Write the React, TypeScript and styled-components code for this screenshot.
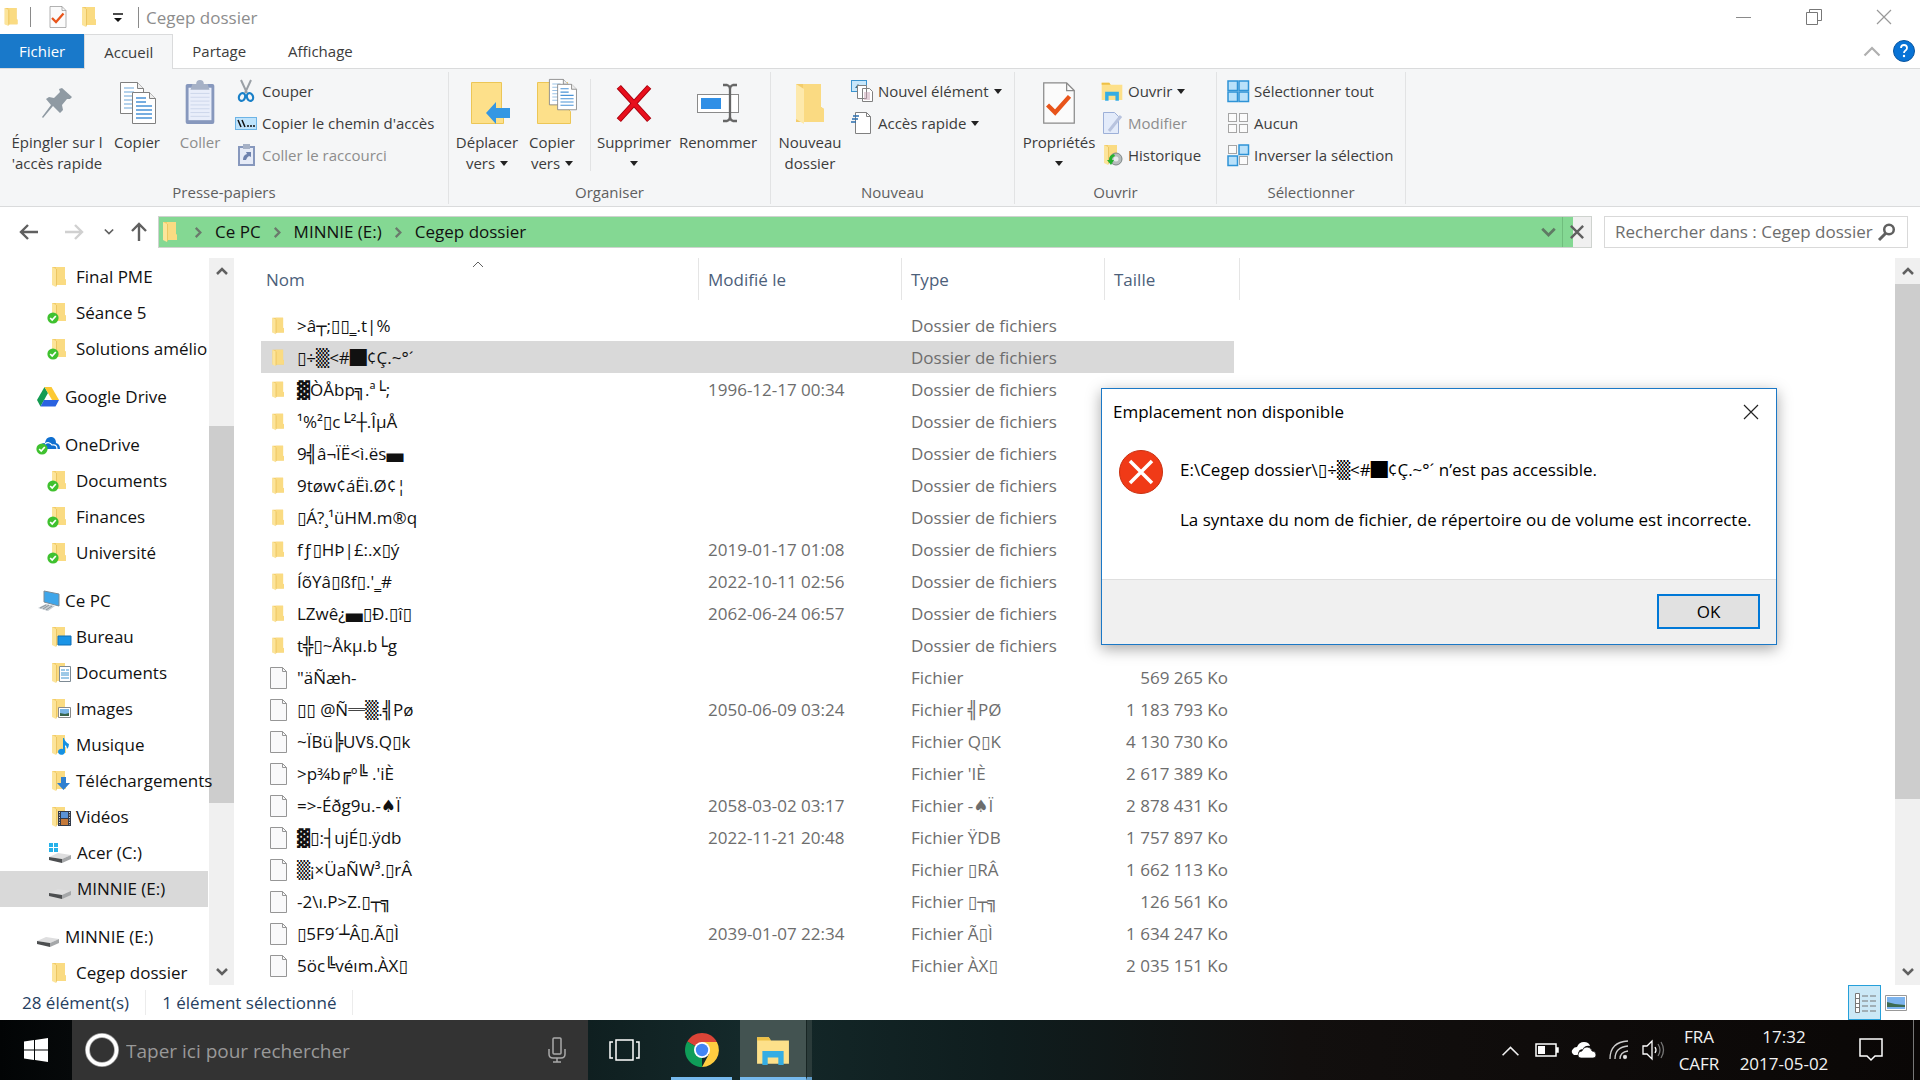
import React from "react";
import styled, { createGlobalStyle } from "styled-components";

const FONT = `"Open Sans", "Noto Sans", "DejaVu Sans", sans-serif`;

const Global = createGlobalStyle`
  *, *::before, *::after { box-sizing: border-box; }
  body { margin: 0; background: #fff; font-family: ${FONT}; font-size: 17px; line-height: 24px; color: #000; }
  button { font: inherit; color: inherit; background: none; border: 0; padding: 0; cursor: default; }
  input { font: inherit; }
  svg { display: block; flex: none; overflow: visible; }
`;

const Window = styled.div`
  position: relative;
  display: flex;
  flex-direction: column;
  height: 100vh;
  overflow: hidden;
`;

/* ---------- Title bar and tabs ---------- */

const TitleBar = styled.header`
  display: flex;
  align-items: center;
  height: 34px;
  flex: none;
  padding-left: 2px;
  color: #8d8d8d;
`;

const TitleRule = styled.span`
  width: 1px;
  height: 20px;
  background: #8a8a8a;
  margin: 0 11px 0 8px;
`;

const QuickButton = styled.button<{ $width?: number }>`
  display: flex;
  justify-content: center;
  width: ${(p) => p.$width ?? 32}px;
`;

const TitleText = styled.h1`
  margin: 0 0 0 8px;
  padding: 1px 0 0 7px;
  border-left: 1px solid #8a8a8a;
  font-size: 17px;
  line-height: 20px;
  font-weight: 400;
`;

const WindowButtons = styled.div`
  display: flex;
  margin-left: auto;
  padding-right: 1px;
`;

const WindowButton = styled.button`
  display: flex;
  align-items: center;
  justify-content: center;
  width: 70px;
  height: 34px;
`;

const TabStrip = styled.nav`
  display: flex;
  height: 35px;
  flex: none;
  border-bottom: 1px solid #dadbdc;
`;

const Tab = styled.button<{ $kind?: "file" | "active" }>`
  height: ${(p) => (p.$kind === "active" ? 35 : 34)}px;
  padding: 0 19px 1px;
  margin-right: ${(p) => (p.$kind ? 0 : 4)}px;
  font-size: 15px;
  color: ${(p) => (p.$kind === "file" ? "#fff" : "#3c3c3c")};
  background: ${(p) => (p.$kind === "file" ? "#1979ca" : p.$kind === "active" ? "#f5f6f7" : "transparent")};
  border: solid #dadbdc;
  border-width: ${(p) => (p.$kind === "active" ? "1px 1px 0 1px" : "0")};
`;

const TabTools = styled.div`
  display: flex;
  align-items: center;
  gap: 12px;
  margin-left: auto;
  padding-right: 5px;
`;

/* ---------- Ribbon ---------- */

const Ribbon = styled.section`
  display: flex;
  flex: none;
  height: 138px;
  background: #f5f6f7;
  border-bottom: 1px solid #dadbdc;
  font-size: 15px;
  color: #3c3c3c;
`;

const Group = styled.div<{ $width: number; $lead: number }>`
  display: flex;
  flex-direction: column;
  width: ${(p) => p.$width}px;
  margin: 3px 0 2px;
  border-right: 1px solid #e2e3e4;

  > div {
    display: flex;
    flex: 1;
    align-items: flex-start;
    padding: 3px 0 0 ${(p) => p.$lead}px;
  }
`;

const GroupName = styled.span`
  text-align: center;
  line-height: 24px;
  color: #5f5f5f;
`;

const BigButton = styled.button<{ $width: number }>`
  display: flex;
  flex-direction: column;
  align-items: center;
  width: ${(p) => p.$width}px;
  line-height: 21px;
  white-space: pre;

  > svg { margin: 7px 0 8px; }
  &:disabled { color: #8d8d8d; }
`;

const LabelLine = styled.span`
  display: flex;
  align-items: center;
  justify-content: center;
  min-height: 21px;
  gap: 5px;
`;

const Inner = styled.span`
  width: 1px;
  height: 92px;
  margin: 4px 0 0 5px;
  background: #e2e3e4;
`;

const SmallColumn = styled.div`
  display: flex;
  flex-direction: column;
  padding-left: 4px;
`;

const SmallButton = styled.button`
  display: flex;
  align-items: center;
  gap: 5px;
  height: 32px;
  white-space: nowrap;
  &:disabled { color: #8d8d8d; }
`;

/* ---------- Address bar ---------- */

const NavBar = styled.div`
  display: flex;
  align-items: center;
  flex: none;
  height: 50px;
  padding: 0 12px 0 8px;
`;

const NavButton = styled.button<{ $width: number }>`
  display: flex;
  align-items: center;
  justify-content: center;
  width: ${(p) => p.$width}px;
  height: 30px;
`;

const Address = styled.div`
  display: flex;
  flex: 1;
  align-items: center;
  height: 32px;
  padding-left: 1px;
  margin-right: 12px;
  border: 1px solid #cfd3cf;
  background: #84d893;
  color: #111;
`;

const Crumb = styled.button`
  display: flex;
  align-items: center;
  gap: 11px;
  padding: 0 0 0 11px;
`;

const AddressTail = styled.div`
  display: flex;
  align-items: stretch;
  margin-left: auto;
  height: 30px;
`;

const StopButton = styled.button`
  display: flex;
  align-items: center;
  justify-content: center;
  width: 29px;
  border-left: 1px solid #70bd7d;
  background: linear-gradient(90deg, #84d893 10px, #f0f0f0 10px);
`;

const SearchBox = styled.label`
  display: flex;
  align-items: center;
  width: 304px;
  height: 32px;
  padding: 0 11px 0 10px;
  border: 1px solid #d9d9d9;

  input {
    flex: 1;
    min-width: 0;
    padding: 0;
    border: 0;
    outline: 0;
    background: none;
    color: #6d6d6d;
  }
  input::placeholder { color: #6d6d6d; opacity: 1; }
`;

/* ---------- Main area ---------- */

const Main = styled.main`
  display: flex;
  flex: 1;
  min-height: 0;
  padding-top: 1px;
`;

/* Long labels may run a little under the scroll bar's edge. */
const Tree = styled.nav`
  position: relative;
  z-index: 1;
  width: 209px;
  flex: none;
  overflow-x: visible;
  overflow-y: clip;
  padding-top: 1px;
`;

const TreeItem = styled.a<{ $root?: boolean; $selected?: boolean }>`
  display: flex;
  align-items: center;
  gap: 5px;
  height: 36px;
  margin: ${(p) => (p.$root ? 12 : 0)}px 1px 0 0;
  padding-left: ${(p) => (p.$root ? 37 : 49)}px;
  background: ${(p) => (p.$selected ? "#d9d9d9" : "transparent")};
  color: #111;
  text-decoration: none;
  white-space: nowrap;
`;

const ScrollBarBox = styled.div`
  display: flex;
  flex-direction: column;
  width: 25px;
  flex: none;
  background: #f0f0f0;
`;

const ScrollArrow = styled.button`
  display: flex;
  align-items: center;
  justify-content: center;
  height: 26px;
  flex: none;
`;

const ScrollPart = styled.div<{ $grow: number; $thumb?: boolean }>`
  flex: ${(p) => p.$grow} 0 0;
  background: ${(p) => (p.$thumb ? "#cdcdcd" : "transparent")};
`;

const FilePane = styled.section`
  flex: 1;
  min-width: 0;
  overflow: hidden;
  padding-left: 27px;
`;

const Table = styled.table`
  width: 979px;
  table-layout: fixed;
  border-collapse: separate;
  border-spacing: 0;
  white-space: nowrap;
`;

const Column = styled.col<{ $width: number }>`
  width: ${(p) => p.$width}px;
`;

const HeadCell = styled.th`
  position: relative;
  height: 42px;
  padding: 2px 0 0 9px;
  border-right: 1px solid #e5e5e5;
  text-align: left;
  font-weight: 400;
  color: #4c607a;

  &:first-child { padding-left: 5px; }
  > svg { position: absolute; top: 0; left: 50%; margin-left: -8px; }
`;

const HeadGap = styled.tr`
  height: 9px;
`;

const FileRow = styled.tr<{ $selected?: boolean }>`
  td {
    height: 32px;
    padding: 1px 0 0 9px;
    color: #6d6d6d;
    background: ${(p) => (p.$selected ? "#d9d9d9" : "transparent")};
  }
  td:nth-child(4) { padding-right: 6px; text-align: right; }
  td:last-child { padding: 0; background: none; }
`;

const FileName = styled.span`
  display: flex;
  align-items: center;
  gap: 9px;
  color: #111;
`;

const BlockGlyph = styled.span`
  font-family: "Noto Sans CJK SC", ${FONT};
  line-height: 1;
`;

const StatusBar = styled.footer`
  display: flex;
  align-items: center;
  flex: none;
  height: 35px;
  padding: 0 13px 0 22px;
  color: #26405f;
`;

const StatusText = styled.span`
  padding: 1px 16px 0 0;
  margin-right: 16px;
  border-right: 1px solid #ececec;
`;

const ViewButtons = styled.div`
  display: flex;
  align-items: center;
  gap: 4px;
  margin-left: auto;
`;

const ViewButton = styled.button<{ $active?: boolean }>`
  display: flex;
  align-items: center;
  justify-content: center;
  width: ${(p) => (p.$active ? 33 : 22)}px;
  height: 35px;
  border: ${(p) => (p.$active ? "1px solid #26a0da" : "0")};
  background: ${(p) => (p.$active ? "#cbe8f6" : "transparent")};
`;

/* ---------- Dialog ---------- */

const Dialog = styled.section`
  position: absolute;
  z-index: 2;
  top: 388px;
  right: 143px;
  width: 676px;
  border: 1px solid #1b78c6;
  background: #fff;
  box-shadow: 0 4px 14px rgba(0, 0, 0, 0.35);
`;

const DialogHead = styled.div`
  display: flex;
  align-items: center;
  justify-content: space-between;
  height: 46px;
  padding: 0 17px 0 11px;
`;

const DialogTitle = styled.h2`
  margin: 0;
  font-size: 17px;
  font-weight: 400;
`;

const DialogBody = styled.div`
  display: flex;
  gap: 17px;
  padding: 15px 17px 0;
  height: 144px;
  white-space: nowrap;

  p { margin: 8px 0 26px; }
  p + p { margin: 0; }
`;

const DialogFoot = styled.div`
  display: flex;
  justify-content: flex-end;
  height: 65px;
  padding: 14px 16px;
  border-top: 1px solid #dfdfdf;
  background: #f0f0f0;
`;

const OkButton = styled.button`
  width: 103px;
  height: 35px;
  border: 2px solid #0078d7;
  background: #e1e1e1;
`;

/* ---------- Taskbar ---------- */

const TaskBar = styled.footer`
  display: flex;
  flex: none;
  height: 60px;
  color: #f2f2f2;
  background: linear-gradient(90deg, #020405 0, #06090a 72px, #0f1f20 588px, #14292a 740px, #0f1d1e 1000px, #120f0e 1300px, #0a0706 100%);
`;

const TaskButton = styled.button<{ $width: number; $open?: boolean; $active?: boolean }>`
  display: flex;
  align-items: center;
  justify-content: center;
  width: ${(p) => p.$width}px;
  background: ${(p) => (p.$active ? "#435351" : "transparent")};
  border-bottom: ${(p) => (p.$open ? "3px solid #76b9ed" : "0")};
  padding-top: ${(p) => (p.$open ? 3 : 0)}px;
`;

const TaskGap = styled.span<{ $width: number }>`
  width: ${(p) => p.$width}px;
`;

const StackEdge = styled.span`
  width: 6px;
  background: #2b3b3a;
  border-left: 1px solid #182524;
  border-bottom: 3px solid #5f9bc8;
`;

const TaskSearch = styled.label`
  display: flex;
  align-items: center;
  gap: 6px;
  width: 516px;
  padding: 0 22px 0 12px;
  background: #333;

  input {
    flex: 1;
    min-width: 0;
    padding: 2px 0 0;
    border: 0;
    outline: 0;
    background: none;
    color: #a0a0a0;
    font-size: 19px;
  }
  input::placeholder { color: #999; opacity: 1; }
`;

const Tray = styled.div`
  display: flex;
  align-items: center;
  margin-left: auto;
`;

const TrayButton = styled.button<{ $width: number }>`
  display: flex;
  flex-direction: column;
  align-items: center;
  justify-content: center;
  width: ${(p) => p.$width}px;
  height: 60px;
  line-height: 27px;
`;

const ShowDesktop = styled.button`
  width: 7px;
  height: 60px;
  border-left: 1px solid #777;
`;

/* ---------- Icons ---------- */

const FolderIcon = ({ size = 22, children }: { size?: number; children?: React.ReactNode }) => (
  <svg width={size} height={size} viewBox="0 0 22 22">
    <path d="M3 1h13v12l1 1v5H3z" fill="#f2cc68" />
    <path d="M7 1h9v12l1 1v5H7z" fill="#fadb82" />
    <path d="M3 1l4 2v18l-4-2z" fill="#fce49a" />
    <path d="M7 3h1v16l-1 2z" fill="#ecc662" />
    {children}
  </svg>
);

const Synced = () => (
  <g>
    <circle cx="4" cy="16" r="5.6" fill="#3fc12f" />
    <path d="M1.200 16l2 2 3.600-4" fill="none" stroke="#fff" strokeWidth="1.700" />
  </g>
);

const FileIcon = () => (
  <svg width="18" height="22" viewBox="0 0 18 22">
    <path d="M.5.5h12l4 4v17H.5z" fill="#f9f9fa" stroke="#969696" />
    <path d="M12.500.5v4h4" fill="none" stroke="#969696" />
  </svg>
);

const CheckDoc = ({ width, height }: { width: number; height: number }) => (
  <svg width={width} height={height} viewBox="0 0 34 44">
    <path d="M1 1h24l8 8v34H1z" fill="#fbfbfb" stroke="#8a8a8a" strokeWidth="1.300" />
    <path d="M25 1v8h8" fill="none" stroke="#8a8a8a" strokeWidth="1.300" />
    <path d="M5 24l8 8 15-17" fill="none" stroke="#e8541a" strokeWidth="4.500" />
  </svg>
);

const Pin = () => (
  <svg width="30" height="42" viewBox="0 0 30 42">
    <path d="M20 6l10 9-2 2-3 0-5 6 1 5-3 3-7-7L1 36l-1-1 9-12-5-6 3-2 5 1 6-6-1-3z" fill="#8f9aa3" />
  </svg>
);

const Sheet = ({ x, y, color }: { x: number; y: number; color: string }) => (
  <g transform={`translate(${x} ${y})`}>
    <path d="M.5.5h17l6 6v25H.5z" fill="#fff" stroke="#808080" />
    <path d="M17.500.5v6h6" fill="#eee" stroke="#808080" />
    <path d="M4 6h10M4 10h10M4 14h16M4 18h16M4 22h16M4 26h16" stroke={color} strokeWidth="1.300" />
  </g>
);

const CopyIcon = () => (
  <svg width="38" height="42" viewBox="0 0 38 42">
    <Sheet x={2} y={0} color="#9cc3e6" />
    <Sheet x={14} y={10} color="#4a93d6" />
  </svg>
);

const PasteIcon = () => (
  <svg width="32" height="42" viewBox="0 3 32 44">
    <rect x="1" y="5" width="30" height="42" rx="2" fill="#8798bd" />
    <rect x="4" y="9" width="24" height="34" fill="#e9eefa" />
    <path d="M8 5h4a4 4 0 018 0h4l2 6H6z" fill="#a6b1c6" />
    <path d="M6 15h20M6 19h20M6 23h20M6 27h20M6 31h20M6 35h20M6 39h20" stroke="#cdd6ea" />
  </svg>
);

const MoveIcon = () => (
  <svg width="32" height="42" viewBox="0 0 32 42">
    <path d="M.5.5h30v26l2 3v12H.5z" fill="#fde08a" stroke="#ecc656" />
    <path d="M15 31l10-11v6h14v10H25v6z" fill="#3497e3" />
  </svg>
);

const CopyToIcon = () => (
  <svg width="31" height="42" viewBox="0 0 31 42">
    <path d="M.5.5h30v26l3 3v12H.5z" fill="#fde08a" stroke="#ecc656" />
    <g transform="translate(12 -3) scale(.82)"><Sheet x={0} y={0} color="#9cc3e6" /><Sheet x={10} y={6} color="#4a93d6" /></g>
  </svg>
);

const DeleteIcon = () => (
  <svg width="38" height="42" viewBox="0 0 40 42">
    <path d="M4 4l32 35M36 4L4 39" stroke="#a8000d" strokeWidth="6" />
    <path d="M4.500 4.500l31 34M35.500 4.500l-31 34" stroke="#e80f1c" strokeWidth="4" />
  </svg>
);

const RenameIcon = () => (
  <svg width="42" height="42" viewBox="0 0 42 42">
    <rect x=".5" y="12.500" width="41" height="18" fill="#fff" stroke="#8a8a8a" />
    <rect x="4" y="16" width="20" height="11" fill="#2f8fe6" />
    <path d="M26 3h4q3 1 3 4v28q0 3-3 4h-4M40 3h-4q-3 1-3 4M40 39h-4q-3-1-3-4" fill="none" stroke="#666" strokeWidth="2.300" />
  </svg>
);

const Scissors = () => (
  <svg width="22" height="22" viewBox="0 0 22 22">
    <path d="M6 0l6 13M16 0l-6 13" stroke="#9aa0a6" strokeWidth="2" />
    <g fill="none" stroke="#1a80c8" strokeWidth="2.200"><ellipse cx="7" cy="17" rx="3" ry="4" transform="rotate(20 7 17)" /><ellipse cx="15" cy="17" rx="3" ry="4" transform="rotate(-20 15 17)" /></g>
  </svg>
);

const PathIcon = () => (
  <svg width="22" height="22" viewBox="0 0 22 22">
    <rect x=".5" y="5.500" width="21" height="12" fill="#bfe3fb" stroke="#6db4e6" />
    <path d="M3 8l3 7M7 8l3 7" stroke="#111" strokeWidth="1.500" />
    <path d="M12 14h2M15 14h2M18 14h2" stroke="#111" strokeWidth="1.500" />
  </svg>
);

const PasteLink = () => (
  <svg width="22" height="22" viewBox="0 0 22 22">
    <rect x="4" y="3" width="15" height="18" fill="#e6ebf7" stroke="#8798bd" strokeWidth="2" />
    <rect x="8" y="0" width="7" height="5" fill="#a6b1c6" />
    <path d="M8 16q0-5 4-6l-1-2h5v5l-2-1q-2 1-3 4z" fill="#6f83ae" />
  </svg>
);

const NewFolder = () => (
  <svg width="30" height="42" viewBox="0 0 30 42">
    <path d="M1 2h25v23l3 2v13H1z" fill="#f3cd6c" />
    <path d="M8 2h18v23l3 2v13H8z" fill="#fada82" />
    <path d="M1 2l8 5v35l-8-5z" fill="#fde9ac" />
  </svg>
);

const NewItem = () => (
  <svg width="22" height="22" viewBox="0 0 22 22">
    <rect x=".5" y=".5" width="15" height="11" fill="#c7e7fb" stroke="#3c94cf" />
    <path d="M4 8l3-4 3 4" fill="#35708f" />
    <path d="M6.500 5.500h9v13h-9zM11.500 8.500h7l3 3v10h-10z" fill="#fff" stroke="#808080" />
    <path d="M13 13h6M13 15h6M13 17h6M13 19h6" stroke="#c9a2b4" />
  </svg>
);

const EasyAccess = () => (
  <svg width="22" height="22" viewBox="0 0 22 22">
    <path d="M4.500.5h11l4 4v17h-15z" fill="#fff" stroke="#808080" />
    <path d="M15.500.5v4h4" fill="none" stroke="#808080" />
    <path d="M2 4h6M1 7h6M0 10h5" stroke="#2b6fae" strokeWidth="1.500" />
  </svg>
);

const ExplorerIcon = ({ size }: { size: number }) => (
  <svg width={size} height={size} viewBox="0 0 32 32">
    <path d="M1 4h11l2 3h17v22H1z" fill="#fde08a" />
    <path d="M1 4h11l2 3H1z" fill="#eec045" />
    <path d="M6 30V17h20v13h-5v-7h-10v7z" fill="#35ade3" />
  </svg>
);

const EditIcon = () => (
  <svg width="22" height="22" viewBox="0 0 22 22">
    <path d="M2.500.5h11l4 4v17h-15z" fill="#e3ebfa" stroke="#9db0d8" />
    <path d="M20 4L8 19" stroke="#b8c3de" strokeWidth="3" />
  </svg>
);

const HistoryIcon = () => (
  <FolderIcon>
    <circle cx="15" cy="15" r="6" fill="#b6bcbc" stroke="#7e8686" />
    <circle cx="15" cy="15" r="2.500" fill="#e8ecec" />
    <path d="M13 10q-5 1-5 6h-2l4 5 3-5h-2q0-3 3-4z" fill="#25b22e" />
  </FolderIcon>
);

const Squares = ({ on }: { on: number[] }) => (
  <svg width="22" height="22" viewBox="0 0 22 22">
    {[0, 1, 2, 3].map((i) => {
      const lit = on.includes(i);
      const x = (i % 2) * 11;
      const y = i > 1 ? 11 : 0;
      return lit ? (
        <rect key={i} x={x + 1} y={y + 1} width="9.500" height="9.500" fill="#b9e1fa" stroke="#2e93d6" strokeWidth="1.500" />
      ) : (
        <rect key={i} x={x + 1.5} y={y + 1.5} width="8" height="8" fill="#fbfbfb" stroke="#a5a5a5" />
      );
    })}
  </svg>
);

const Caret = () => (
  <svg width="8" height="5" viewBox="0 0 8 5"><path d="M0 0h8L4 5z" fill="#222" /></svg>
);

const Chevron = ({ dir, size = 12, color = "#606060", weight = 2 }: { dir: "up" | "down" | "right"; size?: number; color?: string; weight?: number }) => {
  const angle = { up: 0, right: 90, down: 180 }[dir];
  return (
    <svg width={size} height={size} viewBox="0 0 12 12">
      <path d="M1 9l5-5 5 5" fill="none" stroke={color} strokeWidth={weight} transform={`rotate(${angle} 6 6)`} />
    </svg>
  );
};

const Arrow = ({ angle, color }: { angle: number; color: string }) => (
  <svg width="20" height="20" viewBox="0 0 20 20">
    <path d="M19 10H2M9 3l-7 7 7 7" fill="none" stroke={color} strokeWidth="2.400" transform={`rotate(${angle} 10 10)`} />
  </svg>
);

const Cross = ({ size, color, weight }: { size: number; color: string; weight: number }) => (
  <svg width={size} height={size} viewBox="0 0 16 16">
    <path d="M1 1l14 14M15 1L1 15" stroke={color} strokeWidth={weight} />
  </svg>
);

const HelpIcon = () => (
  <svg width="22" height="22" viewBox="0 0 22 22">
    <circle cx="11" cy="11" r="10.500" fill="#0873d6" stroke="#0a559f" />
    <path d="M8 8q0-3 3-3t3 3q0 1.500-1.500 2.500T11 13" fill="none" stroke="#fff" strokeWidth="1.800" />
    <circle cx="11" cy="16" r="1.200" fill="#fff" />
  </svg>
);

const DriveLogo = () => (
  <svg width="23" height="20" viewBox="0 0 23 20">
    <path d="M7.500 0L0 13l3.500 6.500L11 6z" fill="#149b52" />
    <path d="M7.500 0h7l7.500 13h-7z" fill="#fcc934" />
    <path d="M3.500 19.500L7 13h15l-3.500 6.500z" fill="#2a62e0" />
  </svg>
);

const OneDriveIcon = () => (
  <svg width="23" height="22" viewBox="0 0 23 22">
    <path d="M3 14q0-5 5-5 1-7 7-6 4 1 4 6 4 1 4 6H4z" fill="#0f6fd0" />
    <path d="M8 10q4-3 7 1 5-1 5 4" fill="none" stroke="#fff" strokeWidth="1.200" />
    <g transform="translate(1 -1)"><Synced /></g>
  </svg>
);

const PcIcon = () => (
  <svg width="23" height="22" viewBox="0 0 23 22">
    <path d="M7 1l15 3v12L7 12z" fill="#3fa6ea" stroke="#7c8b96" />
    <path d="M1 18l8-4 9 2-7 5z" fill="#c4cbd0" />
    <path d="M3 18l6-3M6 19l6-4M9 20l6-4" stroke="#8c959c" />
  </svg>
);

const DiskIcon = ({ system }: { system?: boolean }) => (
  <svg width="23" height="22" viewBox="0 0 23 22">
    <path d="M0 15l9-4 13 2-9 4z" fill="#dededf" />
    <path d="M0 15l13 2v4L0 18z" fill="#4c4e50" />
    <path d="M13 17l9-4v4l-9 4z" fill="#a5a7a9" />
    {system && <path d="M0 1h4v4H0zM5 1h4v4H5zM0 6h4v4H0zM5 6h4v4H5z" fill="#26b2ea" />}
  </svg>
);

const badges = {
  synced: <Synced />,
  desktop: <path d="M9 10h13v9H9z" fill="#1a94e6" stroke="#0f6fb5" />,
  document: <g><path d="M10.500 4.500h11v15h-11z" fill="#fff" stroke="#7d8a94" /><path d="M12 8h4M17 8h3M12 11h8M12 13h8M12 16h8" stroke="#3c94cf" /></g>,
  picture: <g><path d="M9.500 9.500h12v10h-12z" fill="#fff" stroke="#8a8a8a" /><path d="M11 11h9v7h-9z" fill="#7ab6e6" /><path d="M11 15l5 1 4-1v3h-9z" fill="#39644a" /></g>,
  music: <path d="M15 4q1 4 5 6 0 3-2 5 0-3-2-4v7a3.500 3 0 11-2-3V4z" fill="#1691e2" />,
  download: <path d="M12 7h5v6h4l-6.500 7L8 13h4z" fill="#2f80d0" />,
  video: <g><path d="M9 5h13v15H9z" fill="#333b4a" /><path d="M12 6h7v6h-7z" fill="#5b93d6" /><path d="M12 13h7v6h-7z" fill="#c4793a" /><path d="M10.500 6v13M20.500 6v13" stroke="#ddd" strokeDasharray="1 1.500" /></g>,
};

const ErrorIcon = () => (
  <svg width="44" height="44" viewBox="0 0 44 44">
    <circle cx="22" cy="22" r="21.500" fill="#f03a17" stroke="#c93010" />
    <path d="M11 11l22 22M33 11L11 33" stroke="#fff" strokeWidth="3.500" />
  </svg>
);

const ChromeIcon = () => (
  <svg width="34" height="34" viewBox="0 0 34 34">
    <path d="M17 17L2.300 8.500A17 17 0 0131.700 8.500z" fill="#db4437" />
    <path d="M17 17v17A17 17 0 012.300 8.500z" fill="#0f9d58" />
    <path d="M17 9h14.900a17 17 0 01-14.900 25l7-13z" fill="#ffcd40" />
    <circle cx="17" cy="17" r="8" fill="#fff" />
    <circle cx="17" cy="17" r="6.200" fill="#4285f4" />
  </svg>
);

/* ---------- Data ---------- */

type Node = { label: string; badge?: keyof typeof badges; icon?: React.ReactNode; root?: boolean; selected?: boolean };

const tree: Node[] = [
  { label: "Final PME" },
  { label: "Séance 5", badge: "synced" },
  { label: "Solutions amélio", badge: "synced" },
  { label: "Google Drive", icon: <DriveLogo />, root: true },
  { label: "OneDrive", icon: <OneDriveIcon />, root: true },
  { label: "Documents", badge: "synced" },
  { label: "Finances", badge: "synced" },
  { label: "Université", badge: "synced" },
  { label: "Ce PC", icon: <PcIcon />, root: true },
  { label: "Bureau", badge: "desktop" },
  { label: "Documents", badge: "document" },
  { label: "Images", badge: "picture" },
  { label: "Musique", badge: "music" },
  { label: "Téléchargements", badge: "download" },
  { label: "Vidéos", badge: "video" },
  { label: "Acer (C:)", icon: <DiskIcon system /> },
  { label: "MINNIE (E:)", icon: <DiskIcon />, selected: true },
  { label: "MINNIE (E:)", icon: <DiskIcon />, root: true },
  { label: "Cegep dossier" },
];

const DIR = "Dossier de fichiers";

const files: [string, string, string, string][] = [
  [">â┬;▯▯‗.t|%", "", DIR, ""],
  ["▯÷▒<#█¢Ç.~°´", "", DIR, ""],
  ["▓ÒÅbp╗.ª└;", "1996-12-17 00:34", DIR, ""],
  ["¹%²▯c└²┼.ÎµÅ", "", DIR, ""],
  ["9╣â¬ÏË<ì.ës▄", "", DIR, ""],
  ["9tøw¢áËì.Ø¢¦", "", DIR, ""],
  ["▯Á?¸¹üHM.m®q", "", DIR, ""],
  ["fƒ▯HÞ|£:.x▯ý", "2019-01-17 01:08", DIR, ""],
  ["ÍõYâ▯ßf▯.'‗#", "2022-10-11 02:56", DIR, ""],
  ["LZwê¿▄▯Ð.▯î▯", "2062-06-24 06:57", DIR, ""],
  ["t╬▯~Åkµ.b└g", "", DIR, ""],
  ["\"äÑæh-", "", "Fichier", "569 265 Ko"],
  ["▯▯ @Ñ═▒.╣Pø", "2050-06-09 03:24", "Fichier ╣PØ", "1 183 793 Ko"],
  ["~ÏBü╠UV§.Q▯k", "", "Fichier Q▯K", "4 130 730 Ko"],
  [">p¾b╔º╚ .'iÈ", "", "Fichier 'IÈ", "2 617 389 Ko"],
  ["=>-Éðg9u.-♠Ï", "2058-03-02 03:17", "Fichier -♠Ï", "2 878 431 Ko"],
  ["▓▯:┤ujÉ▯.ÿdb", "2022-11-21 20:48", "Fichier ŸDB", "1 757 897 Ko"],
  ["▒¡×ÜaÑW³.▯rÂ", "", "Fichier ▯RÂ", "1 662 113 Ko"],
  ["-2\\ı.P>Z.▯┬╗", "", "Fichier ▯┬╗", "126 561 Ko"],
  ["▯5F9´┴Â▯.Ã▯Ì", "2039-01-07 22:34", "Fichier Ã▯Ì", "1 634 247 Ko"],
  ["5öc╚véım.ÀX▯", "", "Fichier ÀX▯", "2 035 151 Ko"],
];

/* Solid blocks and the double rule are drawn from a full-width face. */
const Glyphs = ({ text }: { text: string }) => (
  <span>
    {text.split(/([█▄═])/).map((part, i) => (i % 2 ? <BlockGlyph key={i}>{part}</BlockGlyph> : part))}
  </span>
);

const ScrollBar = ({ before, thumb, after }: { before: number; thumb: number; after: number }) => (
  <ScrollBarBox>
    <ScrollArrow aria-label="Défiler vers le haut"><Chevron dir="up" weight={2.5} /></ScrollArrow>
    <ScrollPart $grow={before} />
    <ScrollPart $grow={thumb} $thumb />
    <ScrollPart $grow={after} />
    <ScrollArrow aria-label="Défiler vers le bas"><Chevron dir="down" weight={2.5} /></ScrollArrow>
  </ScrollBarBox>
);

export default function App() {
  return (
    <Window>
      <Global />
      <TitleBar>
        <FolderIcon size={20} />
        <TitleRule />
        <QuickButton aria-label="Propriétés"><CheckDoc width={18} height={22} /></QuickButton>
        <QuickButton aria-label="Nouveau dossier"><FolderIcon size={22} /></QuickButton>
        <QuickButton $width={24} aria-label="Personnaliser">
          <svg width="10" height="10" viewBox="0 0 10 10"><path d="M0 2h10" stroke="#111" strokeWidth="1.500" /><path d="M1 6h8L5 10z" fill="#111" /></svg>
        </QuickButton>
        <TitleText>Cegep dossier</TitleText>
        <WindowButtons>
          <WindowButton aria-label="Réduire"><svg width="16" height="16"><path d="M0 8.500h15" stroke="#8a8a8a" /></svg></WindowButton>
          <WindowButton aria-label="Restaurer">
            <svg width="16" height="16" fill="none" stroke="#777"><path d="M.5 3.500h11v12H.5zM3.500 3V.5h12v11h-4" /></svg>
          </WindowButton>
          <WindowButton aria-label="Fermer"><Cross size={16} color="#999" weight={1.2} /></WindowButton>
        </WindowButtons>
      </TitleBar>

      <TabStrip>
        <Tab $kind="file">Fichier</Tab>
        <Tab $kind="active">Accueil</Tab>
        <Tab>Partage</Tab>
        <Tab>Affichage</Tab>
        <TabTools>
          <button aria-label="Réduire le ruban"><Chevron dir="up" size={18} color="#b0b0b0" weight={1.5} /></button>
          <button aria-label="Aide"><HelpIcon /></button>
        </TabTools>
      </TabStrip>

      <Ribbon>
        <Group $width={449} $lead={9}>
          <div>
            <BigButton $width={96}><Pin /><LabelLine>Épingler sur l</LabelLine><LabelLine>'accès rapide</LabelLine></BigButton>
            <BigButton $width={64}><CopyIcon /><LabelLine>Copier</LabelLine></BigButton>
            <BigButton $width={62} disabled><PasteIcon /><LabelLine>Coller</LabelLine></BigButton>
            <SmallColumn>
              <SmallButton><Scissors />Couper</SmallButton>
              <SmallButton><PathIcon />Copier le chemin d'accès</SmallButton>
              <SmallButton disabled><PasteLink />Coller le raccourci</SmallButton>
            </SmallColumn>
          </div>
          <GroupName>Presse-papiers</GroupName>
        </Group>
        <Group $width={322} $lead={6}>
          <div>
            <BigButton $width={64}><MoveIcon /><LabelLine>Déplacer</LabelLine><LabelLine>vers<Caret /></LabelLine></BigButton>
            <BigButton $width={66}><CopyToIcon /><LabelLine>Copier</LabelLine><LabelLine>vers<Caret /></LabelLine></BigButton>
            <Inner />
            <BigButton $width={86}><DeleteIcon /><LabelLine>Supprimer</LabelLine><LabelLine><Caret /></LabelLine></BigButton>
            <BigButton $width={82}><RenameIcon /><LabelLine>Renommer</LabelLine></BigButton>
          </div>
          <GroupName>Organiser</GroupName>
        </Group>
        <Group $width={244} $lead={2}>
          <div>
            <BigButton $width={74}><NewFolder /><LabelLine>Nouveau</LabelLine><LabelLine>dossier</LabelLine></BigButton>
            <SmallColumn>
              <SmallButton><NewItem />Nouvel élément<Caret /></SmallButton>
              <SmallButton><EasyAccess />Accès rapide<Caret /></SmallButton>
            </SmallColumn>
          </div>
          <GroupName>Nouveau</GroupName>
        </Group>
        <Group $width={202} $lead={6}>
          <div>
            <BigButton $width={76}><CheckDoc width={34} height={42} /><LabelLine>Propriétés</LabelLine><LabelLine><Caret /></LabelLine></BigButton>
            <SmallColumn>
              <SmallButton><ExplorerIcon size={22} />Ouvrir<Caret /></SmallButton>
              <SmallButton disabled><EditIcon />Modifier</SmallButton>
              <SmallButton><HistoryIcon />Historique</SmallButton>
            </SmallColumn>
          </div>
          <GroupName>Ouvrir</GroupName>
        </Group>
        <Group $width={189} $lead={6}>
          <div>
            <SmallColumn>
              <SmallButton><Squares on={[0, 1, 2, 3]} />Sélectionner tout</SmallButton>
              <SmallButton><Squares on={[]} />Aucun</SmallButton>
              <SmallButton><Squares on={[1, 2]} />Inverser la sélection</SmallButton>
            </SmallColumn>
          </div>
          <GroupName>Sélectionner</GroupName>
        </Group>
      </Ribbon>

      <NavBar>
        <NavButton $width={42} aria-label="Précédent"><Arrow angle={0} color="#606060" /></NavButton>
        <NavButton $width={48} aria-label="Suivant"><Arrow angle={180} color="#d0d0d0" /></NavButton>
        <NavButton $width={22} aria-label="Emplacements récents"><Chevron dir="down" size={10} /></NavButton>
        <NavButton $width={38} aria-label="Dossier parent"><Arrow angle={90} color="#606060" /></NavButton>
        <Address>
          <FolderIcon size={22} />
          {["Ce PC", "MINNIE (E:)", "Cegep dossier"].map((c) => (
            <Crumb key={c}><Chevron dir="right" color="#6a7a6c" weight={2.5} size={11} />{c}</Crumb>
          ))}
          <AddressTail>
            <NavButton $width={28} aria-label="Emplacements précédents"><Chevron dir="down" color="#5f7a64" size={15} weight={2.2} /></NavButton>
            <StopButton aria-label="Arrêter"><Cross size={14} color="#606060" weight={2.8} /></StopButton>
          </AddressTail>
        </Address>
        <SearchBox>
          <input aria-label="Rechercher" placeholder="Rechercher dans : Cegep dossier" />
          <svg width="18" height="18" viewBox="0 0 18 18"><circle cx="11" cy="6.500" r="4.800" fill="none" stroke="#606060" strokeWidth="2.500" /><path d="M7.500 10.500L1 17" stroke="#606060" strokeWidth="3" /></svg>
        </SearchBox>
      </NavBar>

      <Main>
        <Tree>
          {tree.map((n, i) => (
            <TreeItem key={i} href="#" $root={n.root} $selected={n.selected}>
              {n.icon ?? <FolderIcon>{n.badge && badges[n.badge]}</FolderIcon>}
              {n.label}
            </TreeItem>
          ))}
        </Tree>
        <ScrollBar before={142} thumb={378} after={156} />
        <FilePane>
          <Table>
            <colgroup>
              <Column $width={438} />
              <Column $width={203} />
              <Column $width={203} />
              <Column $width={129} />
              <Column $width={6} />
            </colgroup>
            <thead>
              <tr>
                <HeadCell><Chevron dir="up" weight={1} />Nom</HeadCell>
                <HeadCell>Modifié le</HeadCell>
                <HeadCell>Type</HeadCell>
                <HeadCell colSpan={2}>Taille</HeadCell>
              </tr>
            </thead>
            <tbody>
              <HeadGap />
              {files.map(([name, date, type, size], i) => (
                <FileRow key={name} $selected={i === 1}>
                  <td><FileName>{type === DIR ? <FolderIcon size={18} /> : <FileIcon />}<Glyphs text={name} /></FileName></td>
                  <td>{date}</td>
                  <td>{type}</td>
                  <td>{size}</td>
                  <td />
                </FileRow>
              ))}
            </tbody>
          </Table>
        </FilePane>
        <ScrollBar before={0} thumb={516} after={160} />
      </Main>

      <StatusBar>
        <StatusText>28 élément(s)</StatusText>
        <StatusText>1 élément sélectionné</StatusText>
        <ViewButtons>
          <ViewButton $active aria-label="Détails">
            <svg width="22" height="22" viewBox="0 0 22 22" fill="none" stroke="#777">
              <path d="M1.500 1.500h4v19h-4zM1.500 6.500h4M1.500 11.500h4M1.500 15.500h4" fill="#fff" />
              <path d="M8 4h6M16 4h6M8 9h6M16 9h6M8 14h6M16 14h6M8 19h6M16 19h6" />
            </svg>
          </ViewButton>
          <ViewButton aria-label="Grandes icônes">
            <svg width="22" height="16" viewBox="0 0 22 16"><path d="M.5.5h21v15H.5z" fill="#fff" stroke="#999" /><path d="M2 2h18v12H2z" fill="#7db4ee" /><path d="M2 7q9 3 18 3v2H2z" fill="#3d6b52" /></svg>
          </ViewButton>
        </ViewButtons>
      </StatusBar>

      <TaskBar>
        <TaskButton $width={72} aria-label="Démarrer">
          <svg width="24" height="24" viewBox="0 0 24 24"><path d="M0 3.500l10-1.500v9.500H0zM11 2l13-2v11.500H11zM0 12.500h10V22L0 20.500zM11 12.500h13V24l-13-2z" fill="#fff" /></svg>
        </TaskButton>
        <TaskSearch>
          <svg width="36" height="36" viewBox="0 0 36 36"><circle cx="18" cy="18" r="14.500" fill="none" stroke="#999" strokeWidth="5" /><circle cx="18" cy="18" r="14.500" fill="none" stroke="#fff" strokeWidth="3.500" /></svg>
          <input aria-label="Recherche" placeholder="Taper ici pour rechercher" />
          <svg width="18" height="26" viewBox="0 0 18 26" fill="none" stroke="#aaa" strokeWidth="1.500"><rect x="5" y="1" width="8" height="16" rx="1" /><path d="M1 12v5q0 4 4 4h8q4 0 4-4v-5M9 21v4M5 25h8" /></svg>
        </TaskSearch>
        <TaskButton $width={72} aria-label="Affichage des tâches">
          <svg width="31" height="22" viewBox="0 0 31 22" fill="none" stroke="#fff" strokeWidth="1.500"><path d="M7 1h17v20H7zM4 3H1v16h3M27 3h3v16h-3" /></svg>
        </TaskButton>
        <TaskGap $width={11} />
        <TaskButton $width={61} $open aria-label="Chrome"><ChromeIcon /></TaskButton>
        <TaskGap $width={8} />
        <TaskButton $width={66} $open $active aria-label="Explorateur"><ExplorerIcon size={34} /></TaskButton>
        <StackEdge />
        <Tray>
          <TrayButton $width={38} aria-label="Icônes cachées"><Chevron dir="up" size={19} color="#eee" weight={1} /></TrayButton>
          <TrayButton $width={36} aria-label="Batterie">
            <svg width="24" height="14" viewBox="0 0 24 14"><path d="M1 1h20v12H1zM22 5h1v4h-1z" fill="none" stroke="#fff" strokeWidth="1.500" /><path d="M3 3h7v8H3z" fill="#fff" /></svg>
          </TrayButton>
          <TrayButton $width={36} aria-label="OneDrive">
            <svg width="25" height="16" viewBox="0 0 25 16"><path d="M3 13q-4-3-1-6 1-2 4-2 2-5 7-5 5 0 6 4-5-1-7 3-5 0-5 6z" fill="#fff" /><path d="M10 16q-3 0-3-3 0-4 4-4 1-4 5-4t5 4q4 0 4 4 0 3-3 3z" fill="#fff" stroke="#111" strokeWidth=".7" /></svg>
          </TrayButton>
          <TrayButton $width={36} aria-label="Wi-Fi">
            <svg width="20" height="20" viewBox="0 0 20 20" fill="none" stroke="#ccc" strokeWidth="1.300"><path d="M1 19Q1 2 19 1M6 19Q6 7 19 6M11 19q0-7 8-8" /><circle cx="16" cy="17" r="1.500" fill="#fff" /></svg>
          </TrayButton>
          <TrayButton $width={32} aria-label="Volume">
            <svg width="22" height="20" viewBox="0 0 22 20" fill="none" stroke="#fff" strokeWidth="1.300"><path d="M1 6h4l5-5v18l-5-5H1z" /><path d="M13 7q2 3 0 6" /><path d="M16 4q4 6 0 12M19 2q5 8 0 16" stroke="#777" /></svg>
          </TrayButton>
          <TrayButton $width={60}><span>FRA</span><span>CAFR</span></TrayButton>
          <TrayButton $width={110}><span>17:32</span><span>2017-05-02</span></TrayButton>
          <TrayButton $width={64} aria-label="Notifications">
            <svg width="24" height="24" viewBox="0 0 24 24" fill="none" stroke="#fff" strokeWidth="1.500"><path d="M1 1h22v17h-7l-4 4-4-4H1z" /></svg>
          </TrayButton>
          <TaskGap $width={10} />
          <ShowDesktop aria-label="Afficher le Bureau" />
        </Tray>
      </TaskBar>

      <Dialog role="dialog" aria-labelledby="dialog-title">
        <DialogHead>
          <DialogTitle id="dialog-title">Emplacement non disponible</DialogTitle>
          <button aria-label="Fermer"><Cross size={16} color="#222" weight={1.2} /></button>
        </DialogHead>
        <DialogBody>
          <ErrorIcon />
          <div>
            <p><Glyphs text={"E:\\Cegep dossier\\▯÷▒<#█¢Ç.~°´ n’est pas accessible."} /></p>
            <p>La syntaxe du nom de fichier, de répertoire ou de volume est incorrecte.</p>
          </div>
        </DialogBody>
        <DialogFoot><OkButton>OK</OkButton></DialogFoot>
      </Dialog>
    </Window>
  );
}
